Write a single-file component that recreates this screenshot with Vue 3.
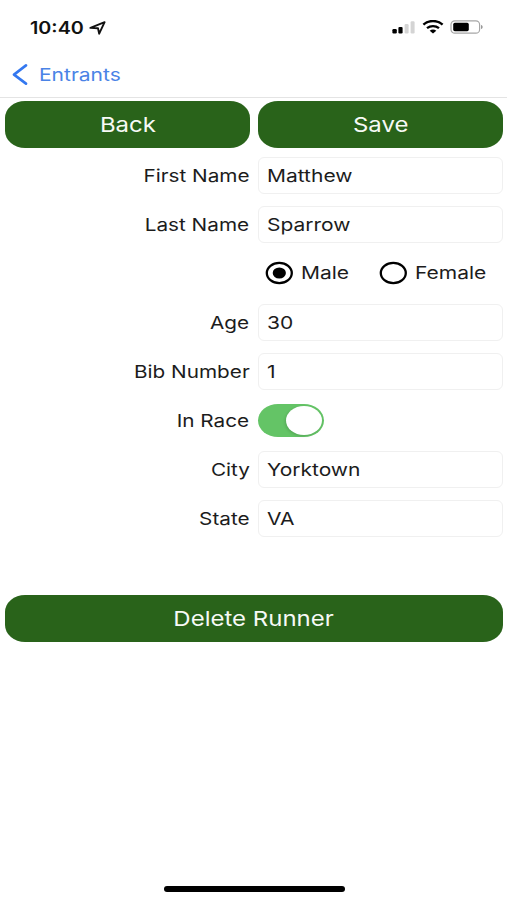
<script setup>
import { ref } from 'vue'

const rows = ref([
  { label: 'First Name', value: 'Matthew', type: 'text' },
  { label: 'Last Name', value: 'Sparrow', type: 'text' },
  { label: '', value: 'Male', type: 'radio', options: ['Male', 'Female'] },
  { label: 'Age', value: '30', type: 'text' },
  { label: 'Bib Number', value: '1', type: 'text' },
  { label: 'In Race', value: true, type: 'switch' },
  { label: 'City', value: 'Yorktown', type: 'text' },
  { label: 'State', value: 'VA', type: 'text' },
])
</script>

<template>
  <main class="screen">
    <header class="status">
      <div class="clock">
        <span class="wide time">10:40</span>
        <svg class="arrow" width="18" height="14" viewBox="0 0 18 14">
          <path d="M1.4 6.9 15.6 1.2 10.2 12.7 9 7.3Z" fill="none" stroke="#111" stroke-width="1.9" stroke-linejoin="round" />
        </svg>
      </div>
      <div class="indicators">
        <svg width="23" height="13" viewBox="0 0 23 13">
          <rect x="0.4" y="8" width="4.4" height="4.5" rx="1.2" fill="#000" />
          <rect x="6.4" y="5.9" width="4.2" height="6.6" rx="1.2" fill="#000" />
          <rect x="12.6" y="3" width="4" height="9.5" rx="1.2" fill="#d4d4d4" />
          <rect x="18.6" y="0.3" width="4" height="12.2" rx="1.2" fill="#d4d4d4" />
        </svg>
        <svg class="wifi" width="22" height="14" viewBox="0 0 22 14">
          <path d="M1.4 4.6C6.8-.1 15.2-.1 20.6 4.6" fill="none" stroke="#000" stroke-width="2.5" />
          <path d="M5 8.2C8.5 5.3 13.5 5.3 17 8.2" fill="none" stroke="#000" stroke-width="2.3" />
          <path d="M7.7 10.7C9.5 9.2 12.5 9.2 14.3 10.7L11 13.4Z" fill="#000" />
        </svg>
        <svg class="battery" width="34" height="14" viewBox="0 0 34 14">
          <rect x="1" y="0.8" width="28.6" height="12.4" rx="3.8" fill="#fff" stroke="#a6a6a6" stroke-width="1.2" />
          <rect x="3.2" y="2.8" width="15.6" height="8.4" rx="1.6" fill="#000" />
          <path d="M31 5c2.2.6 2.2 3.4 0 4Z" fill="#999" />
        </svg>
      </div>
    </header>

    <nav class="nav">
      <svg width="16" height="21" viewBox="0 0 16 21">
        <path d="M14 1.4 2 10.6 14 19.6" fill="none" stroke="#3478f0" stroke-width="2.6" stroke-linecap="round" stroke-linejoin="round" />
      </svg>
      <a class="wide crumb">Entrants</a>
    </nav>

    <div class="actions">
      <button class="btn"><span class="wide">Back</span></button>
      <button class="btn"><span class="wide">Save</span></button>
    </div>

    <form class="form">
      <div v-for="(row, i) in rows" :key="i" class="row">
        <label class="label"><span class="wide">{{ row.label }}</span></label>
        <div v-if="row.type === 'text'" class="field"><span class="wide">{{ row.value }}</span></div>
        <div v-else-if="row.type === 'radio'" class="radios">
          <div v-for="o in row.options" :key="o" class="radio">
            <svg width="28" height="24" viewBox="0 0 28 24">
              <ellipse cx="14.3" cy="12" rx="12.5" ry="10.2" fill="#fff" stroke="#000" stroke-width="2.3" />
              <ellipse v-if="row.value === o" cx="14.3" cy="12" rx="6.6" ry="5.5" fill="#000" />
            </svg>
            <span class="wide">{{ o }}</span>
          </div>
        </div>
        <div v-else class="switch"><i class="knob"></i></div>
      </div>
    </form>

    <button class="btn delete"><span class="wide">Delete Runner</span></button>
    <div class="home"></div>
  </main>
</template>

<style>
body { background: #fff; }
</style>

<style scoped>
.screen {
  display: flex;
  flex-direction: column;
  box-sizing: border-box;
  width: 507px;
  height: 900px;
  background: #fff;
  color: #1c1c1c;
  font-family: Inter, "Liberation Sans", sans-serif;
  font-size: 17.5px;
  line-height: 22px;
  white-space: nowrap;
}
.wide {
  display: inline-block;
  transform: scaleX(1.2);
  transform-origin: left center;
}
.status {
  display: flex;
  justify-content: space-between;
  align-items: center;
  box-sizing: border-box;
  height: 54px;
  padding: 0 23px 0 30px;
}
.clock { display: flex; align-items: center; padding-top: 1px; }
.time { width: 59px; font-size: 17px; font-weight: 600; color: #111; transform: scaleX(1.16); }
.indicators { display: flex; align-items: center; }
.wifi { margin-left: 7px; }
.battery { margin-left: 6px; }
.nav {
  display: flex;
  align-items: center;
  gap: 11px;
  box-sizing: border-box;
  height: 44px;
  padding: 0 0 2px 12px;
  border-bottom: 1px solid #e4e4e4;
}
.crumb { color: #4a83e6; }
.actions {
  display: grid;
  grid-template-columns: 1fr 1fr;
  gap: 8px;
  padding: 3px 4px 0 5px;
}
.btn {
  height: 47px;
  padding: 0;
  border: 0;
  border-radius: 20px / 17px;
  background: #29631a;
  color: #f7faf6;
  font: 400 20.5px/26px Inter, "Liberation Sans", sans-serif;
}
.btn .wide { transform: scaleX(1.17); transform-origin: center; }
.form { margin-top: 3px; }
.row {
  display: grid;
  grid-template-columns: 249.5px 245.5px;
  gap: 8px;
  align-items: center;
  height: 49px;
}
.label { text-align: right; }
.label .wide { transform: scaleX(1.185); transform-origin: right center; }
.field {
  display: flex;
  align-items: center;
  box-sizing: border-box;
  height: 37px;
  padding: 1px 0 0 8.5px;
  border: 1px solid #f0f0f0;
  border-radius: 6px;
}
.radios { display: grid; grid-template-columns: 114px 1fr; padding: 0 0 1px 7.5px; }
.radio { display: flex; align-items: center; gap: 8px; }
.switch {
  display: flex;
  justify-content: flex-end;
  align-items: center;
  box-sizing: border-box;
  width: 66px;
  height: 33px;
  margin-left: 0.5px;
  padding-right: 2px;
  border-radius: 20px / 16.5px;
  background: #64c466;
}
.knob {
  width: 36px;
  height: 29px;
  border-radius: 50%;
  background: #fff;
  box-shadow: -1px 1px 3px rgba(0, 0, 0, 0.15);
}
.delete { margin: 52px 4px 0 5px; }
.home {
  width: 181px;
  height: 5.5px;
  margin: auto auto 8.5px 164px;
  border-radius: 3px;
  background: #000;
}
</style>
